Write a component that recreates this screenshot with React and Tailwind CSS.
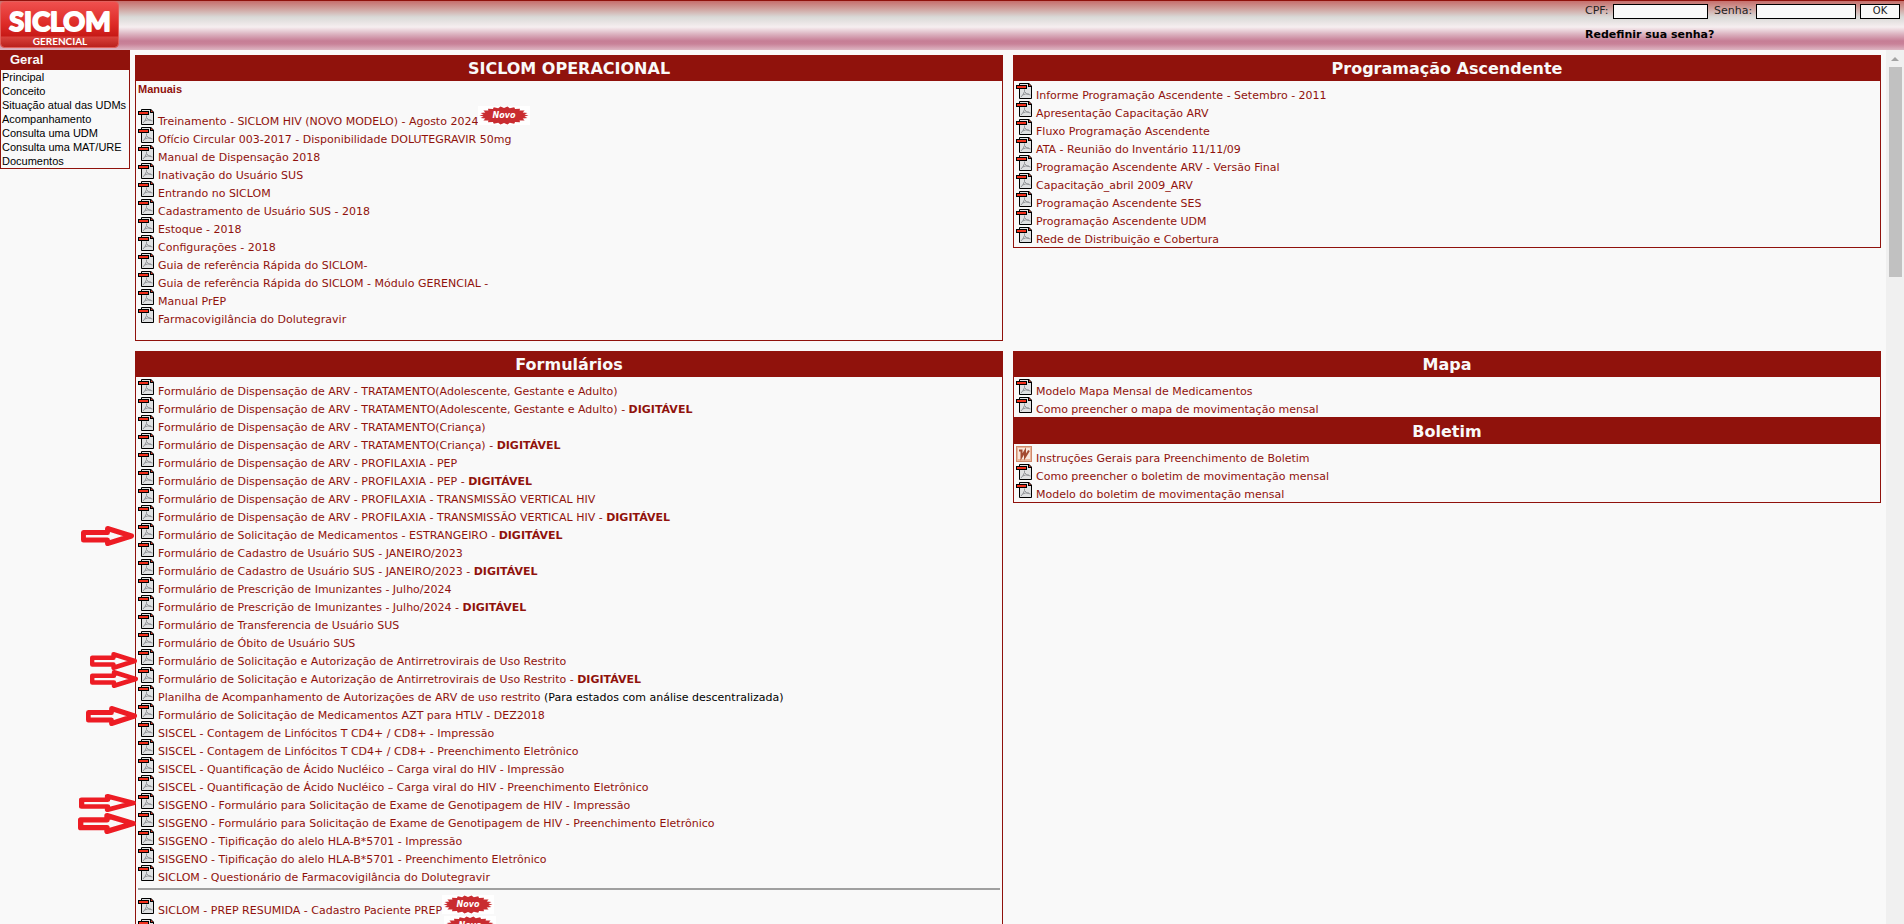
import React from "react";

const D = "DIGITÁVEL";

const manuals = [
  { t: "Treinamento - SICLOM HIV (NOVO MODELO) - Agosto 2024", novo: true },
  { t: "Ofício Circular 003-2017 - Disponibilidade DOLUTEGRAVIR 50mg" },
  { t: "Manual de Dispensação 2018" },
  { t: "Inativação do Usuário SUS" },
  { t: "Entrando no SICLOM" },
  { t: "Cadastramento de Usuário SUS - 2018" },
  { t: "Estoque - 2018" },
  { t: "Configurações - 2018" },
  { t: "Guia de referência Rápida do SICLOM-" },
  { t: "Guia de referência Rápida do SICLOM - Módulo GERENCIAL -" },
  { t: "Manual PrEP" },
  { t: "Farmacovigilância do Dolutegravir" },
];

const ascending = [
  { t: "Informe Programação Ascendente - Setembro - 2011" },
  { t: "Apresentação Capacitação ARV" },
  { t: "Fluxo Programação Ascendente" },
  { t: "ATA - Reunião do Inventário 11/11/09" },
  { t: "Programação Ascendente ARV - Versão Final" },
  { t: "Capacitação_abril 2009_ARV" },
  { t: "Programação Ascendente SES" },
  { t: "Programação Ascendente UDM" },
  { t: "Rede de Distribuição e Cobertura" },
];

const forms = [
  { t: "Formulário de Dispensação de ARV - TRATAMENTO(Adolescente, Gestante e Adulto)" },
  { t: "Formulário de Dispensação de ARV - TRATAMENTO(Adolescente, Gestante e Adulto) - ", b: D },
  { t: "Formulário de Dispensação de ARV - TRATAMENTO(Criança)" },
  { t: "Formulário de Dispensação de ARV - TRATAMENTO(Criança) - ", b: D },
  { t: "Formulário de Dispensação de ARV - PROFILAXIA - PEP" },
  { t: "Formulário de Dispensação de ARV - PROFILAXIA - PEP - ", b: D },
  { t: "Formulário de Dispensação de ARV - PROFILAXIA - TRANSMISSÃO VERTICAL HIV" },
  { t: "Formulário de Dispensação de ARV - PROFILAXIA - TRANSMISSÃO VERTICAL HIV - ", b: D },
  { t: "Formulário de Solicitação de Medicamentos - ESTRANGEIRO - ", b: D },
  { t: "Formulário de Cadastro de Usuário SUS - JANEIRO/2023" },
  { t: "Formulário de Cadastro de Usuário SUS - JANEIRO/2023 - ", b: D },
  { t: "Formulário de Prescrição de Imunizantes - Julho/2024" },
  { t: "Formulário de Prescrição de Imunizantes - Julho/2024 - ", b: D },
  { t: "Formulário de Transferencia de Usuário SUS" },
  { t: "Formulário de Óbito de Usuário SUS" },
  { t: "Formulário de Solicitação e Autorização de Antirretrovirais de Uso Restrito" },
  { t: "Formulário de Solicitação e Autorização de Antirretrovirais de Uso Restrito - ", b: D },
  {
    t: "Planilha de Acompanhamento de Autorizações de ARV de uso restrito",
    note: " (Para estados com análise descentralizada)",
  },
  { t: "Formulário de Solicitação de Medicamentos AZT para HTLV - DEZ2018" },
  { t: "SISCEL - Contagem de Linfócitos T CD4+ / CD8+ - Impressão" },
  { t: "SISCEL - Contagem de Linfócitos T CD4+ / CD8+ - Preenchimento Eletrônico" },
  { t: "SISCEL - Quantificação de Ácido Nucléico – Carga viral do HIV - Impressão" },
  { t: "SISCEL - Quantificação de Ácido Nucléico – Carga viral do HIV - Preenchimento Eletrônico" },
  { t: "SISGENO - Formulário para Solicitação de Exame de Genotipagem de HIV - Impressão" },
  { t: "SISGENO - Formulário para Solicitação de Exame de Genotipagem de HIV - Preenchimento Eletrônico" },
  { t: "SISGENO - Tipificação do alelo HLA-B*5701 - Impressão" },
  { t: "SISGENO - Tipificação do alelo HLA-B*5701 - Preenchimento Eletrônico" },
  { t: "SICLOM - Questionário de Farmacovigilância do Dolutegravir" },
];

const maps = [
  { t: "Modelo Mapa Mensal de Medicamentos" },
  { t: "Como preencher o mapa de movimentação mensal" },
];

const bulletins = [
  { t: "Instruções Gerais para Preenchimento de Boletim", word: true },
  { t: "Como preencher o boletim de movimentação mensal" },
  { t: "Modelo do boletim de movimentação mensal" },
];

const menu = [
  "Principal",
  "Conceito",
  "Situação atual das UDMs",
  "Acompanhamento",
  "Consulta uma UDM",
  "Consulta uma MAT/URE",
  "Documentos",
];

const arrows = [
  { x: 81, y: 526, w: 53, h: 20 },
  { x: 90, y: 652, w: 47, h: 18 },
  { x: 90, y: 670, w: 48, h: 18 },
  { x: 86, y: 706, w: 51, h: 20 },
  { x: 79, y: 794, w: 57, h: 18 },
  { x: 78, y: 813, w: 58, h: 21 },
];

function PdfIcon() {
  return (
    <svg className="size-4 shrink-0" viewBox="0 0 16 16" aria-hidden="true">
      <path d="M3.500 .500H12.500L15.500 3.500V15.500H3.500Z" fill="#dfe1e2" stroke="#000" />
      <path d="M12 0H13L16 3V4H12Z" fill="#000" />
      <path d="M13 1L15 3H13Z" fill="#d8402f" />
      <path
        d="M8.500 6.500V8.500Q7.500 11.500 5 14M8.500 8.500Q10 11.500 14.500 12M6.500 12Q9.500 10.500 13 11"
        fill="none"
        stroke="#93969a"
      />
      <rect x="0" y="2" width="11" height="4" fill="#000" />
      <rect x="1" y="3" width="9" height="2" fill="#f0301c" />
    </svg>
  );
}

function WordIcon() {
  return (
    <svg className="size-4 shrink-0" viewBox="0 0 16 16" aria-hidden="true">
      <rect width="16" height="16" fill="#d08a6c" />
      <rect x="1" y="1" width="14" height="14" fill="#e9b79d" />
      <rect x="2" y="2" width="12" height="11" fill="#f8e6db" />
      <path d="M3 4.500H5.500L5.500 11L9 5V11L13 4.500" fill="none" stroke="#a34a30" strokeWidth="2" />
    </svg>
  );
}

const burst = Array.from({ length: 44 }, (_, i) => {
  const a = (i / 44) * Math.PI * 2;
  const k = i % 2 ? 0.84 : 1;
  return `${(26 + 24.5 * k * Math.cos(a)).toFixed(1)},${(9.5 + 9 * k * Math.sin(a)).toFixed(1)}`;
}).join(" ");

function NovoBadge() {
  return (
    <svg className="h-[19px] w-[52px] shrink-0 self-start" viewBox="0 0 52 19" role="img" aria-label="Novo">
      <rect width="52" height="19" fill="#fff" />
      <polygon points={burst} fill="#c92c30" />
      <text x="26" y="12" textAnchor="middle" fontFamily="DejaVu Sans, sans-serif" fontWeight="700" fontStyle="italic" fontSize="8" fill="#fff">
        Novo
      </text>
    </svg>
  );
}

function Row({ item, tall }) {
  return (
    <li className={tall ? "flex h-[21px] items-end" : "flex h-[18px] items-end"}>
      <span className="flex h-[18px] items-start">{item.word ? <WordIcon /> : <PdfIcon />}</span>
      <a href="#" className="ml-1 whitespace-pre leading-[10px]">
        {item.t}
        {item.b && <b>{item.b}</b>}
      </a>
      {item.note && <span className="whitespace-pre leading-[10px] text-black">{item.note}</span>}
      {item.novo && <NovoBadge />}
    </li>
  );
}

function List({ items, tall }) {
  return (
    <ul>
      {items.map((item) => (
        <Row key={item.t + (item.b || "")} item={item} tall={tall} />
      ))}
    </ul>
  );
}

function Heading({ children }) {
  return <h2 className="h-[26px] bg-[#90120c] text-center text-base leading-7 font-bold text-[#f9f9f9]">{children}</h2>;
}

function Logo() {
  return (
    <svg className="h-[47px] w-[120px]" viewBox="0 0 120 47" role="img" aria-label="SICLOM Gerencial">
      <defs>
        <linearGradient id="logoRed" x1="0" y1="0" x2="0" y2="1">
          <stop offset="0" stopColor="#f0514f" />
          <stop offset="0.500" stopColor="#dd2a26" />
          <stop offset="0.740" stopColor="#c81a17" />
          <stop offset="0.780" stopColor="#d8403b" />
          <stop offset="1" stopColor="#b81f1b" />
        </linearGradient>
      </defs>
      <rect x="0.500" y="0.500" width="118" height="46" rx="4" fill="url(#logoRed)" stroke="#e2605c" />
      <text
        x="60"
        y="30"
        textAnchor="middle"
        fontFamily="Lato, sans-serif"
        fontWeight="700"
        fontSize="27"
        fill="#fff"
        stroke="#fff"
        strokeWidth="2"
        strokeLinejoin="round"
      >
        SICLOM
      </text>
      <text x="60" y="44" textAnchor="middle" fontFamily="Lato, sans-serif" fontWeight="700" fontSize="10" fill="#fff">
        GERENCIAL
      </text>
    </svg>
  );
}

export default function App() {
  return (
    <div className="relative flex h-screen flex-col overflow-hidden bg-[#f9f9f9] font-['DejaVu_Sans',sans-serif] text-[11px] text-[#90120c]">
      <header className="flex h-[50px] shrink-0 justify-between border-t border-[#90120c] bg-[linear-gradient(to_bottom,#c66f6c_0px,#cf9c98_7px,#d9d9d7_16px,#f6eef0_26px,#dcb4c1_33px,#c67d95_40px,#c98299_43px,#deb6c3_49px)]">
        <Logo />
        <form className="flex w-[319px] flex-col text-black" onSubmit={(e) => e.preventDefault()}>
          <div className="flex h-[18px] items-center pt-[2px] text-[#222]">
            <label htmlFor="cpf" className="w-7">CPF:</label>
            <input id="cpf" className="h-[15px] w-[95px] border border-black bg-[#f9f9f9] px-1" />
            <label htmlFor="senha" className="ml-[6px] w-[42px]">Senha:</label>
            <input id="senha" type="password" className="h-[15px] w-[100px] border border-black bg-[#f9f9f9] px-1" />
            <button className="ml-1 h-[15px] w-10 border border-black bg-[#f9f9f9] text-[10px] leading-3">OK</button>
          </div>
          <a href="#" className="mt-2 font-bold leading-4">Redefinir sua senha?</a>
        </form>
      </header>

      <div className="flex min-h-0 flex-1">
        <nav className="w-[130px] shrink-0 self-start border border-t-0 border-[#90120c] font-['Liberation_Sans',sans-serif] text-black">
          <h2 className="h-5 bg-[#90120c] pl-[9px] text-[13px] leading-5 font-bold text-[#f9f9f9]">Geral</h2>
          <ul className="pl-px">
            {menu.map((m) => (
              <li key={m} className="h-[14px] leading-[14px] whitespace-nowrap">
                <a href="#">{m}</a>
              </li>
            ))}
          </ul>
        </nav>

        <main className="grid min-w-0 flex-1 grid-cols-2 content-start items-start gap-[10px] overflow-hidden px-[5px] pt-[5px]">
          <section className="border border-t-0 border-[#90120c]">
            <Heading>SICLOM OPERACIONAL</Heading>
            <div className="px-[2px] pb-[15px]">
              <h3 className="mb-[9px] pt-px font-['Liberation_Sans',sans-serif] leading-[15px] font-bold">Manuais</h3>
              <List items={manuals.slice(0, 1)} tall />
              <List items={manuals.slice(1)} />
            </div>
          </section>

          <section className="border border-t-0 border-[#90120c]">
            <Heading>Programação Ascendente</Heading>
            <div className="px-[2px] pt-[2px] pb-[2px]">
              <List items={ascending} />
            </div>
          </section>

          <section className="border border-t-0 border-[#90120c]">
            <Heading>Formulários</Heading>
            <div className="px-[2px] pt-[2px]">
              <List items={forms} />
              <hr className="my-[5px] border-t-2 border-[#a0a0a0]" />
              <List items={[{ t: "SICLOM - PREP RESUMIDA - Cadastro Paciente PREP", novo: true }]} tall />
              <div className="flex h-[21px] items-end">
                <span className="flex h-[18px] items-start">
                  <PdfIcon />
                </span>
                <span className="w-[290px]" />
                <NovoBadge />
              </div>
            </div>
          </section>

          <section className="border border-t-0 border-[#90120c]">
            <Heading>Mapa</Heading>
            <div className="px-[2px] pt-[2px] pb-[2px]">
              <List items={maps} />
            </div>
            <div className="border-t border-[#90120c]">
              <Heading>Boletim</Heading>
            </div>
            <div className="px-[2px] pt-[2px] pb-[2px]">
              <List items={bulletins} />
            </div>
          </section>
        </main>

        <div className="flex w-[18px] shrink-0 flex-col items-center bg-[#f0f0f0]" aria-hidden="true">
          <svg className="h-[17px] w-4" viewBox="0 0 16 17">
            <path d="M4 11L8 7L12 11Z" fill="#a3a3a3" />
          </svg>
          <div className="h-[210px] w-[13px] bg-[#c1c1c1]" />
        </div>
      </div>

      {arrows.map((a) => (
        <svg
          key={a.y}
          className="absolute"
          style={{ left: a.x, top: a.y, width: a.w, height: a.h }}
          viewBox="0 0 54 20"
          preserveAspectRatio="none"
          aria-hidden="true"
        >
          <path
            d="M2.500 6.500H27V2.500L51.500 10L27 17.500V14H2.500Z"
            fill="#f9f9f9"
            stroke="#ed1c24"
            strokeWidth="5"
            strokeLinejoin="round"
          />
        </svg>
      ))}
    </div>
  );
}
